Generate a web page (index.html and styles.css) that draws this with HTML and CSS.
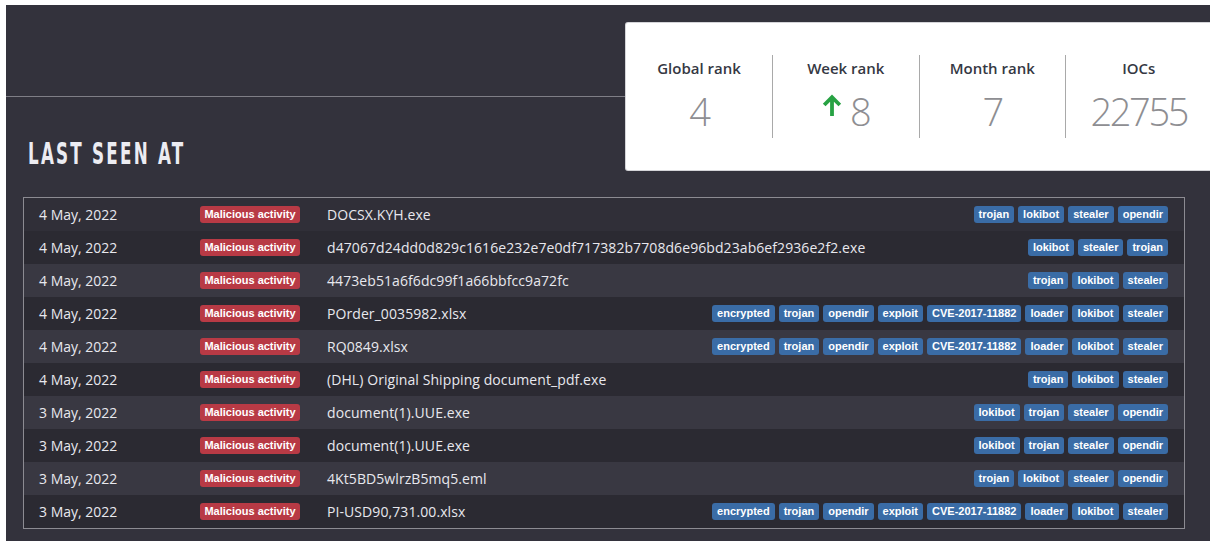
FILE: index.html
```html
<!DOCTYPE html>
<html lang="en">
<head>
<meta charset="utf-8">
<title>Last seen at</title>
<link rel="stylesheet" href="styles.css">
</head>
<body>
<div class="page">
  <header class="top-bar"></header>

  <section class="stats-card">
    <div class="stat">
      <div class="stat-label">Global rank</div>
      <div class="stat-value">4</div>
    </div>
    <div class="stat">
      <div class="stat-label">Week rank</div>
      <div class="stat-value">
        <svg class="trend-up" viewBox="0 0 20 22" width="20" height="22" aria-hidden="true">
          <path d="M10 22V3.2M2.2 11L10 3.2l7.8 7.8" fill="none" stroke="#27a243" stroke-width="3.8"/>
        </svg>8
      </div>
    </div>
    <div class="stat">
      <div class="stat-label">Month rank</div>
      <div class="stat-value">7</div>
    </div>
    <div class="stat">
      <div class="stat-label">IOCs</div>
      <div class="stat-value">22755</div>
    </div>
  </section>

  <h2 class="section-title"><span>Last seen at</span></h2>

  <div class="seen-table">
    <div class="seen-row">
      <span class="seen-date">4 May, 2022</span>
      <span class="verdict">Malicious activity</span>
      <span class="seen-file">DOCSX.KYH.exe</span>
      <span class="tags"><span class="tag">trojan</span><span class="tag">lokibot</span><span class="tag">stealer</span><span class="tag">opendir</span></span>
    </div>
    <div class="seen-row">
      <span class="seen-date">4 May, 2022</span>
      <span class="verdict">Malicious activity</span>
      <span class="seen-file">d47067d24dd0d829c1616e232e7e0df717382b7708d6e96bd23ab6ef2936e2f2.exe</span>
      <span class="tags"><span class="tag">lokibot</span><span class="tag">stealer</span><span class="tag">trojan</span></span>
    </div>
    <div class="seen-row">
      <span class="seen-date">4 May, 2022</span>
      <span class="verdict">Malicious activity</span>
      <span class="seen-file">4473eb51a6f6dc99f1a66bbfcc9a72fc</span>
      <span class="tags"><span class="tag">trojan</span><span class="tag">lokibot</span><span class="tag">stealer</span></span>
    </div>
    <div class="seen-row">
      <span class="seen-date">4 May, 2022</span>
      <span class="verdict">Malicious activity</span>
      <span class="seen-file">POrder_0035982.xlsx</span>
      <span class="tags"><span class="tag">encrypted</span><span class="tag">trojan</span><span class="tag">opendir</span><span class="tag">exploit</span><span class="tag">CVE-2017-11882</span><span class="tag">loader</span><span class="tag">lokibot</span><span class="tag">stealer</span></span>
    </div>
    <div class="seen-row">
      <span class="seen-date">4 May, 2022</span>
      <span class="verdict">Malicious activity</span>
      <span class="seen-file">RQ0849.xlsx</span>
      <span class="tags"><span class="tag">encrypted</span><span class="tag">trojan</span><span class="tag">opendir</span><span class="tag">exploit</span><span class="tag">CVE-2017-11882</span><span class="tag">loader</span><span class="tag">lokibot</span><span class="tag">stealer</span></span>
    </div>
    <div class="seen-row">
      <span class="seen-date">4 May, 2022</span>
      <span class="verdict">Malicious activity</span>
      <span class="seen-file">(DHL) Original Shipping document_pdf.exe</span>
      <span class="tags"><span class="tag">trojan</span><span class="tag">lokibot</span><span class="tag">stealer</span></span>
    </div>
    <div class="seen-row">
      <span class="seen-date">3 May, 2022</span>
      <span class="verdict">Malicious activity</span>
      <span class="seen-file">document(1).UUE.exe</span>
      <span class="tags"><span class="tag">lokibot</span><span class="tag">trojan</span><span class="tag">stealer</span><span class="tag">opendir</span></span>
    </div>
    <div class="seen-row">
      <span class="seen-date">3 May, 2022</span>
      <span class="verdict">Malicious activity</span>
      <span class="seen-file">document(1).UUE.exe</span>
      <span class="tags"><span class="tag">lokibot</span><span class="tag">trojan</span><span class="tag">stealer</span><span class="tag">opendir</span></span>
    </div>
    <div class="seen-row">
      <span class="seen-date">3 May, 2022</span>
      <span class="verdict">Malicious activity</span>
      <span class="seen-file">4Kt5BD5wlrzB5mq5.eml</span>
      <span class="tags"><span class="tag">trojan</span><span class="tag">lokibot</span><span class="tag">stealer</span><span class="tag">opendir</span></span>
    </div>
    <div class="seen-row">
      <span class="seen-date">3 May, 2022</span>
      <span class="verdict">Malicious activity</span>
      <span class="seen-file">PI-USD90,731.00.xlsx</span>
      <span class="tags"><span class="tag">encrypted</span><span class="tag">trojan</span><span class="tag">opendir</span><span class="tag">exploit</span><span class="tag">CVE-2017-11882</span><span class="tag">loader</span><span class="tag">lokibot</span><span class="tag">stealer</span></span>
    </div>
  </div>
</div>
</body>
</html>
```

FILE: styles.css
```css
* {
  box-sizing: border-box;
}

html,
body {
  margin: 0;
  padding: 0;
  background: #ffffff;
  height: 100%;
  overflow: hidden;
}

.page {
  position: relative;
  margin: 5px 0 0 6px;
  height: 536px;
  background: #33323c;
  font-family: "Open Sans", "Noto Sans", sans-serif;
  color: #e6e6ec;
}

/* dark header strip with a thin rule under it */
.top-bar {
  height: 92px;
  border-bottom: 1px solid #7f7e86;
}

/* ranking card that floats over the header rule */
.stats-card {
  position: absolute;
  top: 18px;
  left: 620px;
  width: 600px;
  height: 147px;
  background: #ffffff;
  border-radius: 2px;
  box-shadow: 0 0 0 1px #d4d4d8;
  display: flex;
  padding-top: 32px;
  color: #333;
}

.stat {
  width: 146px;
  height: 83px;
  display: flex;
  flex-direction: column;
  align-items: center;
  padding-top: 2px;
}

.stat + .stat {
  border-left: 1px solid #a9a9a9;
  width: 146.5px;
}

.stat-label {
  font-size: 15px;
  line-height: 22px;
  font-weight: 600;
  color: #353843;
}

.stat-value {
  margin-top: 10px;
  font-size: 38px;
  line-height: 44px;
  font-weight: 300;
  letter-spacing: -2.4px;
  color: #8e8e92;
  display: flex;
  align-items: center;
}

.trend-up {
  margin-right: 8px;
  margin-top: -12px;
}

.section-title {
  margin: 42px 0 0 22px;
  height: 30px;
  font-family: "DejaVu Sans Condensed", "DejaVu Sans", sans-serif;
  font-stretch: condensed;
  font-weight: 700;
  font-size: 30px;
  line-height: 30px;
  text-transform: uppercase;
  color: #ececf2;
}

.section-title span {
  display: inline-block;
  letter-spacing: 3.6px;
  transform: scaleX(0.62);
  transform-origin: left center;
}

.seen-table {
  margin: 28px 0 0 17px;
  width: 1162px;
  border: 1px solid #8c8b92;
  background: #33323c;
}

.seen-row {
  height: 33px;
  display: flex;
  align-items: center;
  padding: 0 16px 0 15px;
  font-size: 14px;
  color: #e8e8ee;
  background: #2b2a32;
}

.seen-row:nth-child(odd) {
  background: #393842;
}

.seen-row:first-child {
  background: #302f38;
}

.seen-date {
  width: 161px;
  flex: none;
}

.verdict,
.tag {
  font-family: "Liberation Sans", Arial, sans-serif;
  font-weight: 700;
  font-size: 11px;
  line-height: 17px;
  height: 17px;
  color: #ffffff;
  border-radius: 3px;
  white-space: nowrap;
}

.verdict {
  flex: none;
  width: 100px;
  text-align: center;
  background: #b83a45;
}

.seen-file {
  margin-left: 27px;
  white-space: nowrap;
  letter-spacing: 0.08px;
}

.tags {
  margin-left: auto;
  display: flex;
  gap: 4px;
}

.tag {
  padding: 0 5px;
  background: #3a6ca6;
}
```
